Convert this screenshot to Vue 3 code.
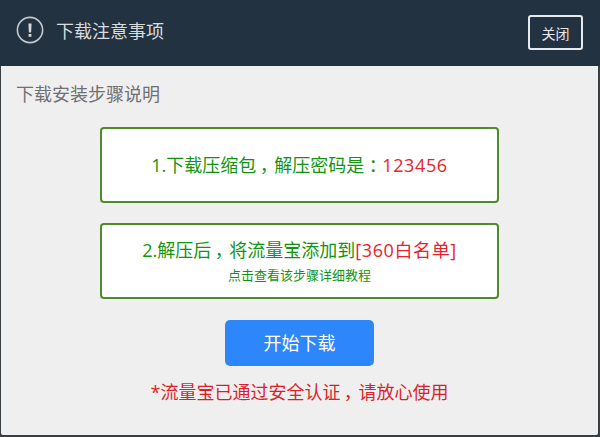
<script setup>
const steps = { title: '下载注意事项', sub: '下载安装步骤说明' }
</script>

<template>
  <div class="win">
    <header class="head">
      <svg class="ico" width="28" height="28" viewBox="0 0 28 28">
        <circle cx="14" cy="14" r="12.6" fill="none" stroke="#c3c8cd" stroke-width="1.6" />
        <path d="M12.4 7.5h3.2l-.5 9h-2.2z" fill="#d5d8db" />
        <rect x="12.6" y="18" width="2.8" height="2.8" fill="#d5d8db" />
      </svg>
      <span class="title">{{ steps.title }}</span>
      <button class="close">关闭</button>
    </header>
    <main class="body">
      <div class="sub">{{ steps.sub }}</div>
      <div class="card one">
        <div class="big">1.下载压缩包<span class="p">，</span>解压密码是<span class="p">：</span><span class="red">123456</span></div>
      </div>
      <div class="card two">
        <div class="big">2.解压后<span class="p">，</span>将流量宝添加到<span class="red">[360白名单]</span></div>
        <div class="small">点击查看该步骤详细教程</div>
      </div>
      <button class="go">开始下载</button>
      <div class="note">*流量宝已通过安全认证<span class="p">，</span>请放心使用</div>
    </main>
  </div>
</template>

<style>
html, body { margin: 0; background: #3a3f44; }
</style>

<style scoped>
.win {
  width: 600px;
  height: 437px;
  box-sizing: border-box;
  padding: 0 2px 2px 1px;
  background: #3a3f44;
  display: flex;
  flex-direction: column;
  font-family: "Open Sans", "Noto Sans CJK SC", sans-serif;
}
.head {
  height: 66px;
  flex: none;
  margin: 0 -2px 0 -1px;
  background: #233241;
  display: flex;
  align-items: center;
  padding: 0 17px 0 16px;
}
.ico { flex: none; margin-top: -6px; }
.title {
  margin-left: 12px;
  margin-top: -7px;
  font-size: 18px;
  color: #d8dcdf;
}
.close {
  margin-left: auto;
  width: 55px;
  height: 35px;
  margin-top: -1px;
  box-sizing: border-box;
  background: transparent;
  border: 2px solid #e6eaee;
  border-radius: 3px;
  color: #e6e9ec;
  font: 14px "Noto Sans CJK SC", sans-serif;
  padding: 0;
}
.body {
  flex: 1;
  background: #efeff0;
  display: flex;
  flex-direction: column;
  align-items: center;
  border-radius: 0 0 2px 2px;
}
.sub {
  align-self: flex-start;
  margin: 16px 0 0 15px;
  font-size: 18px;
  line-height: 24px;
  color: #6f7072;
}
.card {
  width: 399px;
  box-sizing: border-box;
  background: #fff;
  border: 2px solid #4f8a2b;
  border-radius: 4px;
  display: flex;
  flex-direction: column;
  align-items: center;
  justify-content: center;
  color: #129412;
}
.one { height: 76px; margin-top: 21px; }
.two { height: 76px; margin-top: 20px; padding-bottom: 2px; }
.big { font-size: 18px; line-height: 26px; }
.p {
  display: inline-block;
  width: 1em;
  text-align: center;
  font-feature-settings: "palt";
}
.red { color: #e8222e; letter-spacing: 0.6px; }
.small { font-size: 13px; line-height: 18px; margin-top: 3px; }
.go {
  width: 149px;
  height: 46px;
  margin-top: 21px;
  background: #2d87fb;
  border: 0;
  border-radius: 5px;
  color: #fff;
  font: 18px "Noto Sans CJK SC", sans-serif;
  padding: 0 0 3px;
}
.note {
  margin-top: 13px;
  font-size: 18px;
  line-height: 26px;
  color: #dc1f2b;
}
</style>
